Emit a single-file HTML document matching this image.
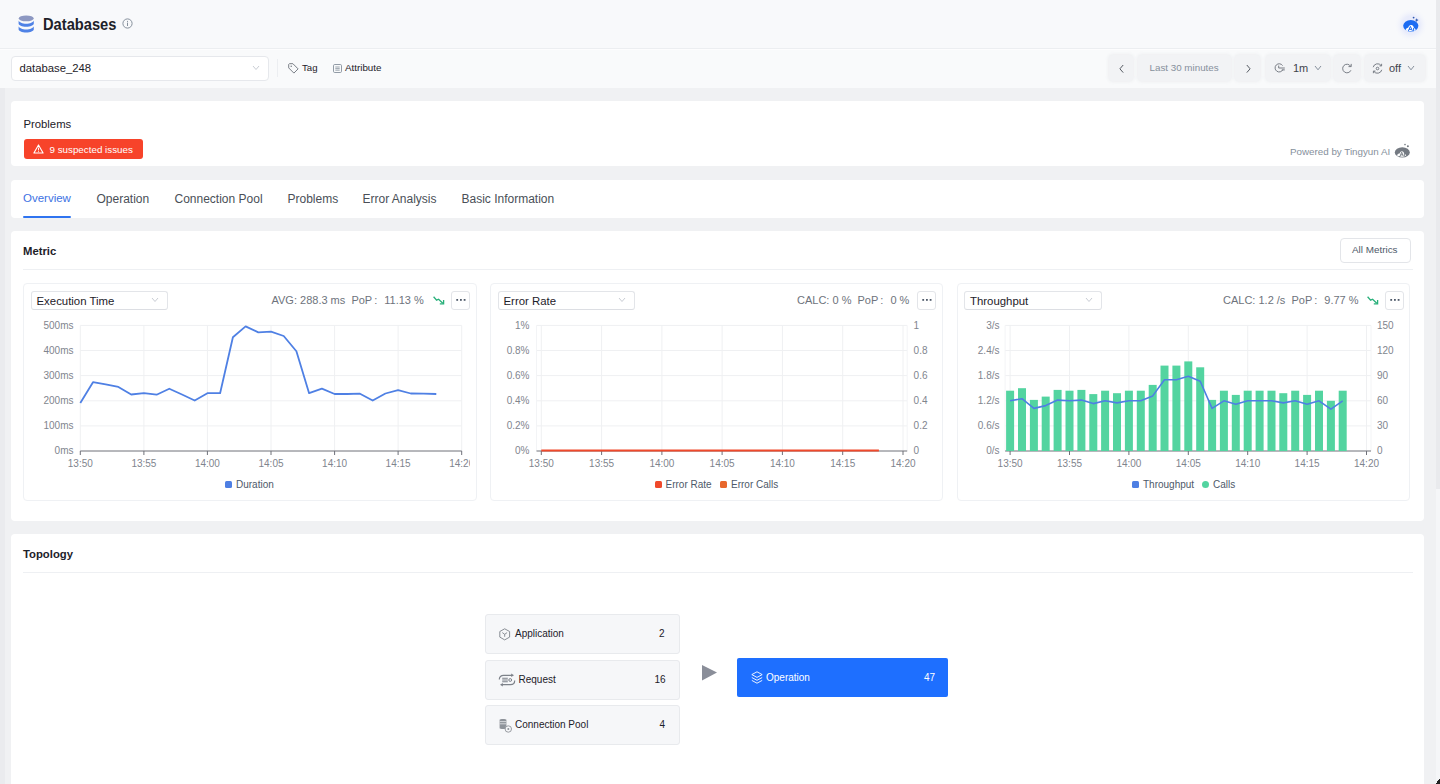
<!DOCTYPE html>
<html><head><meta charset="utf-8">
<style>
*{box-sizing:border-box;margin:0;padding:0}
html,body{width:1440px;height:784px;overflow:hidden}
body{font-family:"Liberation Sans", sans-serif;background:#f0f1f3;position:relative;color:#1d2129}
.abs{position:absolute}
.card{position:absolute;background:#fff;border-radius:4px}
.t{position:absolute;white-space:nowrap;line-height:1}
svg text{font-family:"Liberation Sans", sans-serif}
.btn{position:absolute;top:55px;height:25.5px;background:#f2f3f5;border-radius:4px;box-shadow:0 0 3px 1px rgba(236,237,240,0.9)}
</style></head><body>
<div class="abs" style="left:0;top:0;width:1440px;height:48px;background:#f8f9fb"></div>
<div class="abs" style="left:0;top:48px;width:1440px;height:1px;background:#eceef1"></div>
<div class="abs" style="left:0;top:49px;width:1440px;height:1px;background:#fdfdfe"></div>
<div class="abs" style="left:0;top:50px;width:1440px;height:38px;background:#f9fafb"></div>
<div class="abs" style="left:0;top:88px;width:5px;height:696px;background:#eaebee"></div>
<div class="abs" style="left:1436px;top:0;width:4px;height:489px;background:#e9eaed"></div><div class="abs" style="left:1436px;top:489px;width:4px;height:295px;background:#f5f6f8"></div><div class="abs" style="left:1436px;top:778px;width:4px;height:6px;background:linear-gradient(135deg,transparent 50%,#222 50%)"></div>

<!-- header -->
<svg class="abs" style="left:17.5px;top:14.5px" width="17" height="19" viewBox="0 0 17 19">
<ellipse cx="8.2" cy="3.4" rx="7.5" ry="2.9" fill="#8d98c2"/>
<path d="M0.6 5.6 v3 c0 1.8 3.4 3.2 7.6 3.2 s7.6-1.4 7.6-3.2 v-3 c-0.6 1.9-3.8 3.2-7.6 3.2 s-7-1.3-7.6-3.2z" fill="#4f82e6"/>
<path d="M0.6 11.3 v3 c0 1.8 3.4 3.2 7.6 3.2 s7.6-1.4 7.6-3.2 v-3 c-0.6 1.9-3.8 3.2-7.6 3.2 s-7-1.3-7.6-3.2z" fill="#4f82e6"/>
</svg>
<div class="t" style="left:42.5px;top:15.5px;font-size:16.4px;font-weight:700;color:#1d2129;transform:scaleX(0.895);transform-origin:0 0">Databases</div>
<svg class="abs" style="left:122px;top:18px" width="11" height="11" viewBox="0 0 11 11"><circle cx="5.5" cy="5.5" r="4.6" fill="none" stroke="#86909c" stroke-width="1"/><rect x="5" y="4.6" width="1" height="3.4" fill="#86909c"/><rect x="5" y="2.9" width="1" height="1" fill="#86909c"/></svg>
<!-- AI glow icon -->
<svg class="abs" style="left:1393px;top:7px" width="36" height="36" viewBox="0 0 36 36">
<defs><radialGradient id="gl" cx="50%" cy="50%" r="50%"><stop offset="0%" stop-color="#e4e8fb"/><stop offset="55%" stop-color="#eaedfb"/><stop offset="100%" stop-color="#f8f9fb" stop-opacity="0"/></radialGradient></defs>
<circle cx="18" cy="18" r="17" fill="url(#gl)"/>
<ellipse cx="17.8" cy="18.8" rx="7.6" ry="5.9" fill="#1c6cf2"/>
<path d="M12.6 23.6 c0.2-1.9 1.3-2.9 2.5-2.8 c0.5-2 1.9-3.1 3.2-2.9 c1.5 0.2 2.5 1.6 2.6 3.1 c0.9 0.1 1.6 0.9 1.8 2.2 c-1.4 0.7-3.3 1.1-5.1 1.1 c-1.9 0-3.6-0.3-5-0.7z" fill="#fff"/>
<path d="M15.4 23.9 L17.4 19.4 L19.4 23.9 M16.1 22.4 H18.7 M20.6 21 V23.9" fill="none" stroke="#1c6cf2" stroke-width="1"/>
<circle cx="20.6" cy="10.6" r="0.9" fill="#2f57b0"/>
<path d="M23.7 11.3 l0.6 1.2 l1.2 0.6 l-1.2 0.6 l-0.6 1.2 l-0.6-1.2 l-1.2-0.6 l1.2-0.6z" fill="#2f57b0"/>
</svg>

<!-- toolbar -->
<div class="abs" style="left:10.5px;top:55.5px;width:258px;height:25px;background:#fff;border:1px solid #e6e8ec;border-radius:4px"></div>
<div class="t" style="left:19.5px;top:63px;font-size:11.3px;color:#1d2129">database_248</div>
<svg class="abs" style="left:251.5px;top:65px" width="8" height="5.5" viewBox="0 0 8 5.5"><path d="M1 1 L4.0 4.5 L7 1" fill="none" stroke="#c9cdd4" stroke-width="1"/></svg>
<div class="abs" style="left:276.5px;top:59px;width:1px;height:18px;background:#eceef1"></div>
<svg class="abs" style="left:288px;top:63px" width="11" height="11" viewBox="0 0 11 11"><path d="M0.7 1.4 L0.7 4.9 L5.9 10.1 L10.1 5.9 L4.9 0.7 L1.4 0.7z" fill="none" stroke="#6b7079" stroke-width="0.9" stroke-linejoin="round"/><circle cx="3.2" cy="3.2" r="0.7" fill="#6b7079"/></svg>
<div class="t" style="left:302px;top:62.5px;font-size:9.6px;color:#1d2129">Tag</div>
<svg class="abs" style="left:333px;top:64px" width="9" height="9" viewBox="0 0 9 9"><rect x="0.5" y="0.5" width="8" height="8" rx="1.2" fill="none" stroke="#86909c" stroke-width="0.9"/><path d="M2.3 3 H6.7 M2.3 4.6 H6.7 M2.3 6.2 H6.7" stroke="#86909c" stroke-width="0.8"/></svg>
<div class="t" style="left:345px;top:62.5px;font-size:9.8px;color:#1d2129">Attribute</div>

<div class="btn" style="left:1109px;width:24px"></div>
<svg class="abs" style="left:1117.5px;top:63.5px" width="7" height="10" viewBox="0 0 7 10"><path d="M5.2 1 L1.9 4.8 L5.2 8.6" fill="none" stroke="#555a62" stroke-width="1"/></svg>
<div class="btn" style="left:1137.5px;width:93px"></div>
<div class="t" style="left:1149.5px;top:63px;font-size:9.8px;color:#86909c">Last 30 minutes</div>
<div class="btn" style="left:1234.5px;width:25px"></div>
<svg class="abs" style="left:1244.5px;top:63.5px" width="7" height="10" viewBox="0 0 7 10"><path d="M1.8 1 L5.1 4.8 L1.8 8.6" fill="none" stroke="#555a62" stroke-width="1"/></svg>
<div class="btn" style="left:1266px;width:64px"></div>
<svg class="abs" style="left:1274px;top:63px" width="12" height="10" viewBox="0 0 12 10"><path d="M8.6 2.6 A4.1 4.1 0 1 0 8.9 6.6" fill="none" stroke="#6b7079" stroke-width="0.9"/><path d="M4.7 2.6 V5 H10.8 M7.8 6.9 H10.8" fill="none" stroke="#6b7079" stroke-width="0.9"/></svg>
<div class="t" style="left:1293px;top:63px;font-size:11px;color:#3f444c">1m</div>
<svg class="abs" style="left:1313.5px;top:65px" width="8" height="5.8" viewBox="0 0 8 5.8"><path d="M1 1 L4.0 4.8 L7 1" fill="none" stroke="#86909c" stroke-width="1"/></svg>
<div class="btn" style="left:1334px;width:26px"></div>
<svg class="abs" style="left:1341px;top:62.5px" width="12" height="11" viewBox="0 0 12 11"><path d="M9.6 3.2 A4.3 4.3 0 1 0 9.9 7.3" fill="none" stroke="#6b7079" stroke-width="0.9"/><path d="M10.2 0.9 V3.6 H7.5" fill="none" stroke="#6b7079" stroke-width="0.9"/></svg>
<div class="btn" style="left:1365px;width:60px"></div>
<svg class="abs" style="left:1372px;top:62.5px" width="11" height="11" viewBox="0 0 11 11"><path d="M1.2 4.2 A4.5 4.5 0 0 1 9.2 2.6 M9.8 6.8 A4.5 4.5 0 0 1 1.8 8.4" fill="none" stroke="#6b7079" stroke-width="0.9"/><path d="M9.6 0.8 V2.9 H7.5 M1.4 10.2 V8.1 H3.5" fill="none" stroke="#6b7079" stroke-width="0.9"/><circle cx="5.5" cy="5.5" r="1.3" fill="none" stroke="#6b7079" stroke-width="0.9"/></svg>
<div class="t" style="left:1389px;top:63px;font-size:11px;color:#3f444c">off</div>
<svg class="abs" style="left:1407px;top:65px" width="8" height="5.8" viewBox="0 0 8 5.8"><path d="M1 1 L4.0 4.8 L7 1" fill="none" stroke="#86909c" stroke-width="1"/></svg>

<!-- problems card -->
<div class="card" style="left:10.5px;top:101px;width:1413px;height:65px"></div>
<div class="t" style="left:23.5px;top:118.5px;font-size:11.3px;color:#1d2129">Problems</div>
<div class="abs" style="left:23.8px;top:139.3px;width:119px;height:19.5px;background:#f7432a;border-radius:3px"></div>
<svg class="abs" style="left:32.5px;top:144px" width="11" height="10" viewBox="0 0 11 10"><path d="M5.5 0.9 L10.1 9 H0.9z" fill="none" stroke="#fff" stroke-width="1.1" stroke-linejoin="round"/><path d="M5.5 3.6 V6.4" stroke="#fff" stroke-width="0.9"/><rect x="5.05" y="7.2" width="0.9" height="0.9" fill="#fff"/></svg>
<div class="t" style="left:49.5px;top:144.5px;font-size:9.8px;color:#fff">9 suspected issues</div>
<div class="t" style="left:1290px;top:146.5px;font-size:9.8px;color:#86909c">Powered by Tingyun AI</div>
<svg class="abs" style="left:1394px;top:143px" width="17" height="16" viewBox="0 0 17 16">
<ellipse cx="8.3" cy="9.4" rx="7.5" ry="5.2" fill="#747a82"/>
<path d="M3 12.6 c0.5-1.8 1.6-2.4 2.6-2.1 c0.5-1.6 1.9-2.4 2.9-2.1 c1 0.3 1.8 1.4 1.8 2.6 c1 0 1.6 0.6 1.9 1.6 c-1.3 0.9-2.8 1.2-4.4 1.2 c-1.8 0-3.5-0.4-4.8-1.2z" fill="#fff"/>
<path d="M6.1 13.2 L7.7 9.2 L9.3 13.2 M6.7 11.8 H8.8 M10.4 10.6 V13.2" fill="none" stroke="#747a82" stroke-width="0.9"/>
<circle cx="11" cy="1.6" r="0.8" fill="#747a82"/><circle cx="13.9" cy="3.2" r="1" fill="#747a82"/>
</svg>

<!-- tabs card -->
<div class="card" style="left:10.5px;top:180px;width:1413px;height:37.5px"></div>
<div class="t" style="left:23px;top:193px;font-size:11.5px;color:#3d72e3">Overview</div>
<div class="abs" style="left:23px;top:215.5px;width:48px;height:2.2px;background:#2f74f0;border-radius:1px"></div>
<div class="t" style="left:96.5px;top:193px;font-size:12px;color:#4a4f57">Operation</div>
<div class="t" style="left:174.5px;top:193px;font-size:12px;color:#4a4f57">Connection Pool</div>
<div class="t" style="left:287.5px;top:193px;font-size:12px;color:#4a4f57">Problems</div>
<div class="t" style="left:362.5px;top:193px;font-size:12px;color:#4a4f57">Error Analysis</div>
<div class="t" style="left:461.5px;top:193px;font-size:12px;color:#4a4f57">Basic Information</div>

<!-- metric card -->
<div class="card" style="left:10.5px;top:231px;width:1413px;height:290px"></div>
<div class="t" style="left:23px;top:245.5px;font-size:11.3px;font-weight:700;color:#1d2129">Metric</div>
<div class="abs" style="left:1339.5px;top:237.5px;width:71px;height:25.5px;border:1px solid #e3e5e9;border-radius:4px;background:#fff"></div>
<div class="t" style="left:1352px;top:244.8px;font-size:9.9px;color:#4e5969">All Metrics</div>
<div class="abs" style="left:23px;top:269px;width:1390px;height:1px;background:#eef0f3"></div>

<div class="abs" style="left:23px;top:283px;width:453.5px;height:218px;border:1px solid #eff1f4;border-radius:4px"></div>
<div class="abs" style="left:490px;top:283px;width:452.5px;height:218px;border:1px solid #eff1f4;border-radius:4px"></div>
<div class="abs" style="left:957px;top:283px;width:453px;height:218px;border:1px solid #eff1f4;border-radius:4px"></div>

<div class="abs" style="left:30.5px;top:291.3px;width:137px;height:18.5px;border:1px solid #e3e5e9;border-bottom-color:#dcdee3;border-radius:3px"></div>
<div class="t" style="left:36.5px;top:296.2px;font-size:11.4px;color:#1d2129">Execution Time</div>
<svg class="abs" style="left:151px;top:297.3px" width="8" height="5.5" viewBox="0 0 8 5.5"><path d="M1 1 L4.0 4.5 L7 1" fill="none" stroke="#c9cdd4" stroke-width="1"/></svg>
<div class="t" style="left:271.5px;top:295.3px;font-size:11px;color:#6e737c">AVG: 288.3 ms&nbsp; PoP<span style="margin-left:2px">:</span><span style="margin-left:7px">11.13 %</span></div>
<svg class="abs" style="left:433px;top:296px" width="12" height="9" viewBox="0 0 12 9"><path d="M0.6 0.8 L3.6 4.2 L5.6 3.2 L9.8 7.2" fill="none" stroke="#28b07a" stroke-width="1.3"/><path d="M6.8 7.9 L10.6 7.9 L10.6 4.1" fill="none" stroke="#28b07a" stroke-width="1.3"/></svg>
<div class="abs" style="left:450.5px;top:291.2px;width:19px;height:18.5px;border:1px solid #e3e5e9;border-radius:3px;background:#fff"></div><svg class="abs" style="left:450.5px;top:291.2px" width="19" height="19"><rect x="5.3" y="8" width="1.8" height="1.8" fill="#4e5969"/><rect x="9" y="8" width="1.8" height="1.8" fill="#4e5969"/><rect x="12.7" y="8" width="1.8" height="1.8" fill="#4e5969"/></svg>

<div class="abs" style="left:497.5px;top:291.3px;width:137px;height:18.5px;border:1px solid #e3e5e9;border-bottom-color:#dcdee3;border-radius:3px"></div>
<div class="t" style="left:503.5px;top:296.2px;font-size:11.4px;color:#1d2129">Error Rate</div>
<svg class="abs" style="left:618px;top:297.3px" width="8" height="5.5" viewBox="0 0 8 5.5"><path d="M1 1 L4.0 4.5 L7 1" fill="none" stroke="#c9cdd4" stroke-width="1"/></svg>
<div class="t" style="left:797px;top:295.3px;font-size:11px;color:#6e737c">CALC: 0 %&nbsp; PoP<span style="margin-left:2px">:</span><span style="margin-left:7px">0 %</span></div>
<div class="abs" style="left:917px;top:291.2px;width:19px;height:18.5px;border:1px solid #e3e5e9;border-radius:3px;background:#fff"></div><svg class="abs" style="left:917px;top:291.2px" width="19" height="19"><rect x="5.3" y="8" width="1.8" height="1.8" fill="#4e5969"/><rect x="9" y="8" width="1.8" height="1.8" fill="#4e5969"/><rect x="12.7" y="8" width="1.8" height="1.8" fill="#4e5969"/></svg>

<div class="abs" style="left:964px;top:291.3px;width:138px;height:18.5px;border:1px solid #e3e5e9;border-bottom-color:#dcdee3;border-radius:3px"></div>
<div class="t" style="left:970px;top:296.2px;font-size:11.4px;color:#1d2129">Throughput</div>
<svg class="abs" style="left:1085px;top:297.3px" width="8" height="5.5" viewBox="0 0 8 5.5"><path d="M1 1 L4.0 4.5 L7 1" fill="none" stroke="#c9cdd4" stroke-width="1"/></svg>
<div class="t" style="left:1223px;top:295.3px;font-size:11px;color:#6e737c">CALC: 1.2 /s&nbsp; PoP<span style="margin-left:2px">:</span><span style="margin-left:7px">9.77 %</span></div>
<svg class="abs" style="left:1367px;top:296px" width="12" height="9" viewBox="0 0 12 9"><path d="M0.6 0.8 L3.6 4.2 L5.6 3.2 L9.8 7.2" fill="none" stroke="#28b07a" stroke-width="1.3"/><path d="M6.8 7.9 L10.6 7.9 L10.6 4.1" fill="none" stroke="#28b07a" stroke-width="1.3"/></svg>
<div class="abs" style="left:1384.5px;top:291.2px;width:19px;height:18.5px;border:1px solid #e3e5e9;border-radius:3px;background:#fff"></div><svg class="abs" style="left:1384.5px;top:291.2px" width="19" height="19"><rect x="5.3" y="8" width="1.8" height="1.8" fill="#4e5969"/><rect x="9" y="8" width="1.8" height="1.8" fill="#4e5969"/><rect x="12.7" y="8" width="1.8" height="1.8" fill="#4e5969"/></svg>

<svg class="abs" style="left:0;top:0" width="1440" height="784">
<defs><clipPath id="c1"><rect x="24" y="283" width="446" height="218"/></clipPath></defs>
<g clip-path="url(#c1)">
<line x1="80.3" y1="325.4" x2="461.7" y2="325.4" stroke="#eff0f2" stroke-width="1"/>
<line x1="80.3" y1="350.5" x2="461.7" y2="350.5" stroke="#eff0f2" stroke-width="1"/>
<line x1="80.3" y1="375.6" x2="461.7" y2="375.6" stroke="#eff0f2" stroke-width="1"/>
<line x1="80.3" y1="400.8" x2="461.7" y2="400.8" stroke="#eff0f2" stroke-width="1"/>
<line x1="80.3" y1="425.9" x2="461.7" y2="425.9" stroke="#eff0f2" stroke-width="1"/>
<line x1="80.3" y1="325.4" x2="80.3" y2="451.0" stroke="#eff0f2" stroke-width="1"/>
<line x1="143.9" y1="325.4" x2="143.9" y2="451.0" stroke="#eff0f2" stroke-width="1"/>
<line x1="207.4" y1="325.4" x2="207.4" y2="451.0" stroke="#eff0f2" stroke-width="1"/>
<line x1="271.0" y1="325.4" x2="271.0" y2="451.0" stroke="#eff0f2" stroke-width="1"/>
<line x1="334.6" y1="325.4" x2="334.6" y2="451.0" stroke="#eff0f2" stroke-width="1"/>
<line x1="398.1" y1="325.4" x2="398.1" y2="451.0" stroke="#eff0f2" stroke-width="1"/>
<line x1="461.7" y1="325.4" x2="461.7" y2="451.0" stroke="#eff0f2" stroke-width="1"/>
<line x1="80.3" y1="451.0" x2="461.7" y2="451.0" stroke="#6e7079" stroke-width="1"/>
<line x1="80.3" y1="451.0" x2="80.3" y2="455.0" stroke="#6e7079" stroke-width="1"/>
<line x1="143.9" y1="451.0" x2="143.9" y2="455.0" stroke="#6e7079" stroke-width="1"/>
<line x1="207.4" y1="451.0" x2="207.4" y2="455.0" stroke="#6e7079" stroke-width="1"/>
<line x1="271.0" y1="451.0" x2="271.0" y2="455.0" stroke="#6e7079" stroke-width="1"/>
<line x1="334.6" y1="451.0" x2="334.6" y2="455.0" stroke="#6e7079" stroke-width="1"/>
<line x1="398.1" y1="451.0" x2="398.1" y2="455.0" stroke="#6e7079" stroke-width="1"/>
<line x1="461.7" y1="451.0" x2="461.7" y2="455.0" stroke="#6e7079" stroke-width="1"/>
<polyline points="80.3,403.0 93.0,382.2 105.7,384.4 118.4,386.9 131.2,394.5 143.9,393.2 156.6,394.7 169.3,388.7 182.0,394.5 194.7,400.5 207.4,393.2 220.1,393.2 232.9,337.2 245.6,326.4 258.3,332.4 271.0,331.7 283.7,336.0 296.4,351.3 309.1,393.2 321.9,388.7 334.6,394.0 347.3,394.0 360.0,393.7 372.7,400.5 385.4,393.5 398.1,390.2 410.8,393.5 423.6,393.7 436.3,394.0" fill="none" stroke="#4f80e4" stroke-width="1.8" stroke-linejoin="round"/>
<g fill="#7f858e" font-size="10">
<text x="80.3" y="466.6" text-anchor="middle">13:50</text>
<text x="143.9" y="466.6" text-anchor="middle">13:55</text>
<text x="207.4" y="466.6" text-anchor="middle">14:00</text>
<text x="271.0" y="466.6" text-anchor="middle">14:05</text>
<text x="334.6" y="466.6" text-anchor="middle">14:10</text>
<text x="398.1" y="466.6" text-anchor="middle">14:15</text>
<text x="461.7" y="466.6" text-anchor="middle">14:20</text>
<text x="73.5" y="328.6" text-anchor="end">500ms</text>
<text x="73.5" y="353.7" text-anchor="end">400ms</text>
<text x="73.5" y="378.8" text-anchor="end">300ms</text>
<text x="73.5" y="404.0" text-anchor="end">200ms</text>
<text x="73.5" y="429.1" text-anchor="end">100ms</text>
<text x="73.5" y="454.2" text-anchor="end">0ms</text>
</g>
</g>
<line x1="536.5" y1="325.4" x2="907.2" y2="325.4" stroke="#eff0f2" stroke-width="1"/>
<line x1="536.5" y1="350.5" x2="907.2" y2="350.5" stroke="#eff0f2" stroke-width="1"/>
<line x1="536.5" y1="375.6" x2="907.2" y2="375.6" stroke="#eff0f2" stroke-width="1"/>
<line x1="536.5" y1="400.8" x2="907.2" y2="400.8" stroke="#eff0f2" stroke-width="1"/>
<line x1="536.5" y1="425.9" x2="907.2" y2="425.9" stroke="#eff0f2" stroke-width="1"/>
<line x1="541.3" y1="325.4" x2="541.3" y2="451.0" stroke="#eff0f2" stroke-width="1"/>
<line x1="601.6" y1="325.4" x2="601.6" y2="451.0" stroke="#eff0f2" stroke-width="1"/>
<line x1="661.9" y1="325.4" x2="661.9" y2="451.0" stroke="#eff0f2" stroke-width="1"/>
<line x1="722.1" y1="325.4" x2="722.1" y2="451.0" stroke="#eff0f2" stroke-width="1"/>
<line x1="782.4" y1="325.4" x2="782.4" y2="451.0" stroke="#eff0f2" stroke-width="1"/>
<line x1="842.7" y1="325.4" x2="842.7" y2="451.0" stroke="#eff0f2" stroke-width="1"/>
<line x1="903.0" y1="325.4" x2="903.0" y2="451.0" stroke="#eff0f2" stroke-width="1"/>
<line x1="536.5" y1="325.4" x2="536.5" y2="451.0" stroke="#f3f4f6" stroke-width="1"/>
<line x1="907.2" y1="325.4" x2="907.2" y2="451.0" stroke="#f3f4f6" stroke-width="1"/>
<line x1="536.5" y1="451.0" x2="907.2" y2="451.0" stroke="#6e7079" stroke-width="1"/>
<line x1="541.3" y1="451.0" x2="541.3" y2="455.0" stroke="#6e7079" stroke-width="1"/>
<line x1="601.6" y1="451.0" x2="601.6" y2="455.0" stroke="#6e7079" stroke-width="1"/>
<line x1="661.9" y1="451.0" x2="661.9" y2="455.0" stroke="#6e7079" stroke-width="1"/>
<line x1="722.1" y1="451.0" x2="722.1" y2="455.0" stroke="#6e7079" stroke-width="1"/>
<line x1="782.4" y1="451.0" x2="782.4" y2="455.0" stroke="#6e7079" stroke-width="1"/>
<line x1="842.7" y1="451.0" x2="842.7" y2="455.0" stroke="#6e7079" stroke-width="1"/>
<line x1="903.0" y1="451.0" x2="903.0" y2="455.0" stroke="#6e7079" stroke-width="1"/>
<line x1="541.3" y1="450.5" x2="878.9" y2="450.5" stroke="#f0492b" stroke-width="2"/>
<g fill="#7f858e" font-size="10">
<text x="541.3" y="466.6" text-anchor="middle">13:50</text>
<text x="601.6" y="466.6" text-anchor="middle">13:55</text>
<text x="661.9" y="466.6" text-anchor="middle">14:00</text>
<text x="722.1" y="466.6" text-anchor="middle">14:05</text>
<text x="782.4" y="466.6" text-anchor="middle">14:10</text>
<text x="842.7" y="466.6" text-anchor="middle">14:15</text>
<text x="903.0" y="466.6" text-anchor="middle">14:20</text>
<text x="529.5" y="328.6" text-anchor="end">1%</text>
<text x="529.5" y="353.7" text-anchor="end">0.8%</text>
<text x="529.5" y="378.8" text-anchor="end">0.6%</text>
<text x="529.5" y="404.0" text-anchor="end">0.4%</text>
<text x="529.5" y="429.1" text-anchor="end">0.2%</text>
<text x="529.5" y="454.2" text-anchor="end">0%</text>
<text x="913.6" y="328.6" text-anchor="start">1</text>
<text x="913.6" y="353.7" text-anchor="start">0.8</text>
<text x="913.6" y="378.8" text-anchor="start">0.6</text>
<text x="913.6" y="404.0" text-anchor="start">0.4</text>
<text x="913.6" y="429.1" text-anchor="start">0.2</text>
<text x="913.6" y="454.2" text-anchor="start">0</text>
</g>
<line x1="1005.1" y1="325.4" x2="1371.0" y2="325.4" stroke="#eff0f2" stroke-width="1"/>
<line x1="1005.1" y1="350.5" x2="1371.0" y2="350.5" stroke="#eff0f2" stroke-width="1"/>
<line x1="1005.1" y1="375.6" x2="1371.0" y2="375.6" stroke="#eff0f2" stroke-width="1"/>
<line x1="1005.1" y1="400.8" x2="1371.0" y2="400.8" stroke="#eff0f2" stroke-width="1"/>
<line x1="1005.1" y1="425.9" x2="1371.0" y2="425.9" stroke="#eff0f2" stroke-width="1"/>
<line x1="1010.1" y1="325.4" x2="1010.1" y2="451.0" stroke="#eff0f2" stroke-width="1"/>
<line x1="1069.5" y1="325.4" x2="1069.5" y2="451.0" stroke="#eff0f2" stroke-width="1"/>
<line x1="1128.9" y1="325.4" x2="1128.9" y2="451.0" stroke="#eff0f2" stroke-width="1"/>
<line x1="1188.3" y1="325.4" x2="1188.3" y2="451.0" stroke="#eff0f2" stroke-width="1"/>
<line x1="1247.7" y1="325.4" x2="1247.7" y2="451.0" stroke="#eff0f2" stroke-width="1"/>
<line x1="1307.1" y1="325.4" x2="1307.1" y2="451.0" stroke="#eff0f2" stroke-width="1"/>
<line x1="1366.5" y1="325.4" x2="1366.5" y2="451.0" stroke="#eff0f2" stroke-width="1"/>
<line x1="1005.1" y1="325.4" x2="1005.1" y2="451.0" stroke="#f3f4f6" stroke-width="1"/>
<line x1="1371.0" y1="325.4" x2="1371.0" y2="451.0" stroke="#f3f4f6" stroke-width="1"/>
<line x1="1005.1" y1="451.0" x2="1371.0" y2="451.0" stroke="#6e7079" stroke-width="1"/>
<line x1="1010.1" y1="451.0" x2="1010.1" y2="455.0" stroke="#6e7079" stroke-width="1"/>
<line x1="1069.5" y1="451.0" x2="1069.5" y2="455.0" stroke="#6e7079" stroke-width="1"/>
<line x1="1128.9" y1="451.0" x2="1128.9" y2="455.0" stroke="#6e7079" stroke-width="1"/>
<line x1="1188.3" y1="451.0" x2="1188.3" y2="455.0" stroke="#6e7079" stroke-width="1"/>
<line x1="1247.7" y1="451.0" x2="1247.7" y2="455.0" stroke="#6e7079" stroke-width="1"/>
<line x1="1307.1" y1="451.0" x2="1307.1" y2="455.0" stroke="#6e7079" stroke-width="1"/>
<line x1="1366.5" y1="451.0" x2="1366.5" y2="455.0" stroke="#6e7079" stroke-width="1"/>
<rect x="1006.1" y="390.7" width="8" height="60.3" fill="#53d4a0"/>
<rect x="1018.0" y="388.2" width="8" height="62.8" fill="#53d4a0"/>
<rect x="1029.9" y="399.9" width="8" height="51.1" fill="#53d4a0"/>
<rect x="1041.7" y="396.6" width="8" height="54.4" fill="#53d4a0"/>
<rect x="1053.6" y="389.9" width="8" height="61.1" fill="#53d4a0"/>
<rect x="1065.5" y="390.7" width="8" height="60.3" fill="#53d4a0"/>
<rect x="1077.4" y="389.9" width="8" height="61.1" fill="#53d4a0"/>
<rect x="1089.3" y="394.1" width="8" height="56.9" fill="#53d4a0"/>
<rect x="1101.1" y="390.7" width="8" height="60.3" fill="#53d4a0"/>
<rect x="1113.0" y="393.2" width="8" height="57.8" fill="#53d4a0"/>
<rect x="1124.9" y="390.7" width="8" height="60.3" fill="#53d4a0"/>
<rect x="1136.8" y="390.7" width="8" height="60.3" fill="#53d4a0"/>
<rect x="1148.7" y="384.9" width="8" height="66.1" fill="#53d4a0"/>
<rect x="1160.5" y="365.6" width="8" height="85.4" fill="#53d4a0"/>
<rect x="1172.4" y="365.6" width="8" height="85.4" fill="#53d4a0"/>
<rect x="1184.3" y="361.4" width="8" height="89.6" fill="#53d4a0"/>
<rect x="1196.2" y="367.3" width="8" height="83.7" fill="#53d4a0"/>
<rect x="1208.1" y="399.9" width="8" height="51.1" fill="#53d4a0"/>
<rect x="1219.9" y="390.7" width="8" height="60.3" fill="#53d4a0"/>
<rect x="1231.8" y="394.9" width="8" height="56.1" fill="#53d4a0"/>
<rect x="1243.7" y="390.7" width="8" height="60.3" fill="#53d4a0"/>
<rect x="1255.6" y="390.7" width="8" height="60.3" fill="#53d4a0"/>
<rect x="1267.5" y="390.7" width="8" height="60.3" fill="#53d4a0"/>
<rect x="1279.3" y="393.2" width="8" height="57.8" fill="#53d4a0"/>
<rect x="1291.2" y="390.7" width="8" height="60.3" fill="#53d4a0"/>
<rect x="1303.1" y="394.9" width="8" height="56.1" fill="#53d4a0"/>
<rect x="1315.0" y="390.7" width="8" height="60.3" fill="#53d4a0"/>
<rect x="1326.9" y="400.8" width="8" height="50.2" fill="#53d4a0"/>
<rect x="1338.7" y="390.7" width="8" height="60.3" fill="#53d4a0"/>
<polyline points="1010.1,400.8 1022.0,398.7 1033.9,408.4 1045.7,405.6 1057.6,400.1 1069.5,400.8 1081.4,400.1 1093.3,403.6 1105.1,400.8 1117.0,402.9 1128.9,400.8 1140.8,400.8 1152.7,395.9 1164.5,379.8 1176.4,379.8 1188.3,376.3 1200.2,381.2 1212.1,408.4 1223.9,400.8 1235.8,404.2 1247.7,400.8 1259.6,400.8 1271.5,400.8 1283.3,402.9 1295.2,400.8 1307.1,404.2 1319.0,400.8 1330.9,409.1 1342.7,400.8" fill="none" stroke="#4e7fe3" stroke-width="1.6" stroke-linejoin="round"/>
<g fill="#7f858e" font-size="10">
<text x="1010.1" y="466.6" text-anchor="middle">13:50</text>
<text x="1069.5" y="466.6" text-anchor="middle">13:55</text>
<text x="1128.9" y="466.6" text-anchor="middle">14:00</text>
<text x="1188.3" y="466.6" text-anchor="middle">14:05</text>
<text x="1247.7" y="466.6" text-anchor="middle">14:10</text>
<text x="1307.1" y="466.6" text-anchor="middle">14:15</text>
<text x="1366.5" y="466.6" text-anchor="middle">14:20</text>
<text x="999.5" y="328.6" text-anchor="end">3/s</text>
<text x="999.5" y="353.7" text-anchor="end">2.4/s</text>
<text x="999.5" y="378.8" text-anchor="end">1.8/s</text>
<text x="999.5" y="404.0" text-anchor="end">1.2/s</text>
<text x="999.5" y="429.1" text-anchor="end">0.6/s</text>
<text x="999.5" y="454.2" text-anchor="end">0/s</text>
<text x="1376.9" y="328.6" text-anchor="start">150</text>
<text x="1376.9" y="353.7" text-anchor="start">120</text>
<text x="1376.9" y="378.8" text-anchor="start">90</text>
<text x="1376.9" y="404.0" text-anchor="start">60</text>
<text x="1376.9" y="429.1" text-anchor="start">30</text>
<text x="1376.9" y="454.2" text-anchor="start">0</text>
</g>
</svg>

<!-- legends -->
<div class="abs" style="left:225px;top:481px;width:7px;height:7px;background:#4e7fe3;border-radius:1.5px"></div>
<div class="t" style="left:236px;top:480px;font-size:10px;color:#4e5969">Duration</div>
<div class="abs" style="left:655px;top:481px;width:7px;height:7px;background:#f0492b;border-radius:1.5px"></div>
<div class="t" style="left:665.5px;top:480px;font-size:10px;color:#4e5969">Error Rate</div>
<div class="abs" style="left:720px;top:481px;width:7px;height:7px;background:#e8672c;border-radius:1.5px"></div>
<div class="t" style="left:731px;top:480px;font-size:10px;color:#4e5969">Error Calls</div>
<div class="abs" style="left:1132px;top:481px;width:7px;height:7px;background:#4e7fe3;border-radius:1.5px"></div>
<div class="t" style="left:1143px;top:480px;font-size:10px;color:#4e5969">Throughput</div>
<div class="abs" style="left:1202px;top:481px;width:7px;height:7px;background:#53d4a0;border-radius:3.5px"></div>
<div class="t" style="left:1213px;top:480px;font-size:10px;color:#4e5969">Calls</div>

<!-- topology card -->
<div class="card" style="left:10.5px;top:533.5px;width:1413px;height:260px"></div>
<div class="t" style="left:23px;top:549px;font-size:11.3px;font-weight:700;color:#1d2129">Topology</div>
<div class="abs" style="left:23px;top:572px;width:1390px;height:1px;background:#eef0f3"></div>

<div class="abs" style="left:485px;top:614px;width:195px;height:40px;background:#f6f7f9;border:1px solid #e8eaed;border-radius:3px"></div>
<svg class="abs" style="left:499px;top:627.5px" width="12" height="13" viewBox="0 0 12 13"><path d="M5.7 0.8 L10.6 3.5 V9.1 L5.7 11.9 L0.8 9.1 V3.5z" fill="none" stroke="#7d828a" stroke-width="0.9"/><path d="M3.3 4.6 L5.7 6.3 L8.1 4.6 M5.7 6.3 V8.8" fill="none" stroke="#7d828a" stroke-width="0.9"/></svg>
<div class="t" style="left:515px;top:629px;font-size:10px;color:#1d2129">Application</div>
<div class="t" style="left:659px;top:629px;font-size:10px;color:#1d2129">2</div>
<div class="abs" style="left:485px;top:659.5px;width:195px;height:40px;background:#f6f7f9;border:1px solid #e8eaed;border-radius:3px"></div>
<svg class="abs" style="left:498px;top:672.5px" width="18" height="14" viewBox="0 0 18 14"><path d="M14 2.3 H5.5 C3 2.3 1.3 4 1.3 6.4" fill="none" stroke="#7d828a" stroke-width="1.2"/><path d="M13.2 0.6 L16 2.3 L13.2 4z" fill="#7d828a"/><path d="M4 11.7 H12.5 C15 11.7 16.7 10 16.7 7.6" fill="none" stroke="#7d828a" stroke-width="1.2"/><path d="M4.8 10 L2 11.7 L4.8 13.4z" fill="#7d828a"/><path d="M4.2 5.3 H9.8 M4.2 7 H9.8 M4.2 8.7 H9.8" stroke="#7d828a" stroke-width="1.1"/><circle cx="12.2" cy="7" r="1.4" fill="none" stroke="#7d828a" stroke-width="1"/></svg>
<div class="t" style="left:518.5px;top:674.5px;font-size:10px;color:#1d2129">Request</div>
<div class="t" style="left:654.5px;top:674.5px;font-size:10px;color:#1d2129">16</div>
<div class="abs" style="left:485px;top:705px;width:195px;height:40px;background:#f6f7f9;border:1px solid #e8eaed;border-radius:3px"></div>
<svg class="abs" style="left:498.5px;top:717.5px" width="13" height="15" viewBox="0 0 13 15"><path d="M0.6 1.8 C0.6 0.6 7.4 0.6 7.4 1.8 V10.2 C7.4 11.2 0.6 11.2 0.6 10.2z" fill="#8e939a"/><path d="M0.8 3.6 H7.2 M0.8 5.8 H7.2" stroke="#f5f6f8" stroke-width="0.7"/><circle cx="9.3" cy="11" r="3.2" fill="#f5f6f8" stroke="#8e939a" stroke-width="0.9"/><circle cx="9.3" cy="11" r="1" fill="#8e939a"/></svg>
<div class="t" style="left:515px;top:720px;font-size:10px;color:#1d2129">Connection Pool</div>
<div class="t" style="left:659.5px;top:720px;font-size:10px;color:#1d2129">4</div>

<svg class="abs" style="left:701px;top:664px" width="17" height="18"><path d="M1 1 L16 8.5 L1 16.5z" fill="#8a8e99"/></svg>
<div class="abs" style="left:737px;top:657.5px;width:211px;height:39px;background:#1e6fff;border-radius:2px"></div>
<svg class="abs" style="left:750.5px;top:670.5px" width="12" height="13" viewBox="0 0 12 13"><path d="M6 0.8 L11.2 3.6 L6 6.4 L0.8 3.6z" fill="none" stroke="#fff" stroke-width="0.9" stroke-linejoin="round"/><path d="M0.8 6.5 L6 9.3 L11.2 6.5 M0.8 9.4 L6 12.2 L11.2 9.4" fill="none" stroke="#fff" stroke-width="0.9" stroke-linejoin="round"/></svg>
<div class="t" style="left:766px;top:672.6px;font-size:10px;color:#fff">Operation</div>
<div class="t" style="left:924px;top:672.6px;font-size:10px;color:#fff">47</div>
</body></html>
